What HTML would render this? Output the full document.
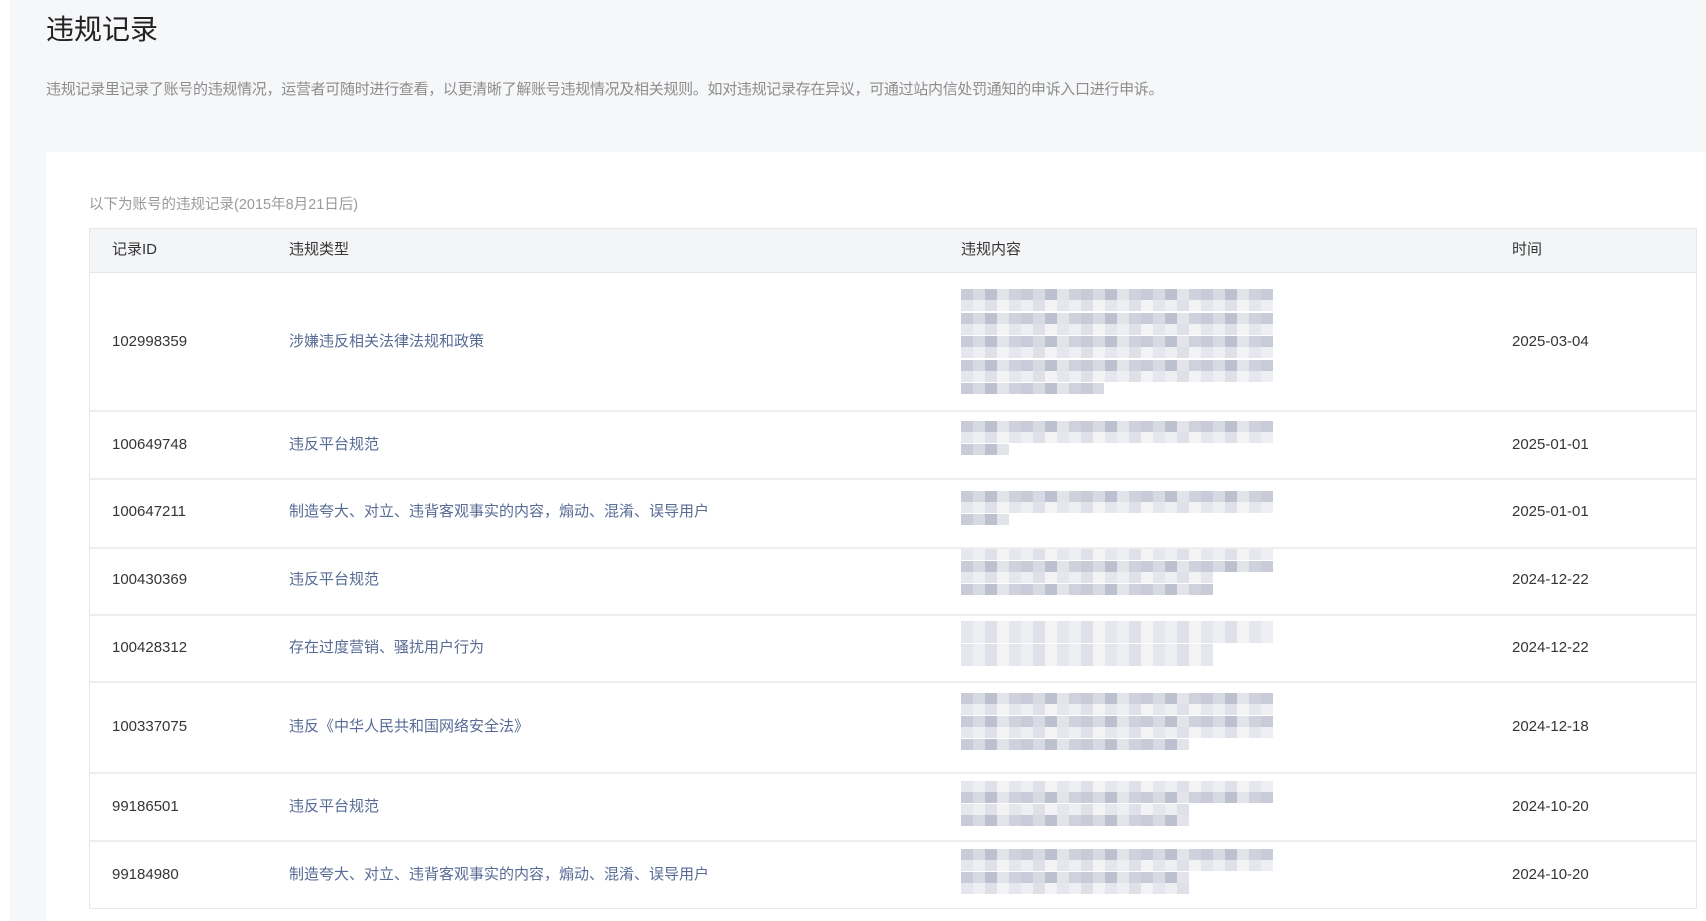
<!DOCTYPE html>
<html><head><meta charset="utf-8"><style>
*{margin:0;padding:0;box-sizing:border-box}
body{width:1706px;height:921px;overflow:hidden;background:#fff;font-family:"Liberation Sans","Noto Sans CJK SC",sans-serif;color:#353535}
.bg{position:absolute;left:10px;top:0;width:1696px;height:921px;background:#f6f7f9}
h1{position:absolute;left:46px;top:14px;font-size:28px;font-weight:normal;color:#222;line-height:32px}
.desc{position:absolute;left:46px;top:80px;font-size:15px;color:#8d8d8d;letter-spacing:-0.3px;line-height:20px;white-space:nowrap}
.card{position:absolute;left:46px;top:152px;width:1660px;height:769px;background:#fff}
.cap{position:absolute;left:89px;top:195px;font-size:14.5px;color:#9a9a9a;line-height:20px}
.tbl{position:absolute;left:89px;top:228px;width:1608px;height:681px;border:1px solid #e7e7eb}
.hd{position:absolute;left:0;top:0;width:100%;height:44px;background:#f4f5f7;border-bottom:1px solid #e7e7eb}
.c{position:absolute;font-size:15px;line-height:20px;white-space:nowrap}
.l{color:#576b95}
.row{position:absolute;left:0;width:100%;border-bottom:2px solid #eeeeef}
.blur{position:absolute;left:871px;width:312px;height:11px;background:repeating-linear-gradient(90deg,#c9ccd8 0 12px,#d8dae3 12px 24px,#bcc0cf 24px 36px,#e3e4ea 36px 48px,#cfd1dc 48px 60px)}
.blur.lt{background:repeating-linear-gradient(90deg,#e6e7ee 0 12px,#eeeff3 12px 24px,#dfe0e8 24px 36px,#f3f3f6 36px 48px)}
</style></head><body>
<div class="bg"></div>
<h1>违规记录</h1>
<div class="desc">违规记录里记录了账号的违规情况，运营者可随时进行查看，以更清晰了解账号违规情况及相关规则。如对违规记录存在异议，可通过站内信处罚通知的申诉入口进行申诉。</div>
<div class="card"></div>
<div class="cap">以下为账号的违规记录(2015年8月21日后)</div>
<div class="tbl">
<div class="hd"></div>
<div class="c" style="left:22px;top:11px">记录ID</div>
<div class="c" style="left:199px;top:11px">违规类型</div>
<div class="c" style="left:871px;top:11px">违规内容</div>
<div class="c" style="left:1422px;top:11px">时间</div>

<div class="row" style="top:44px;height:139px"></div>
<div class="row" style="top:183px;height:68px"></div>
<div class="row" style="top:251px;height:69px"></div>
<div class="row" style="top:320px;height:67px"></div>
<div class="row" style="top:387px;height:67px"></div>
<div class="row" style="top:454px;height:91px"></div>
<div class="row" style="top:545px;height:68px"></div>

<div class="c" style="left:22px;top:103px">102998359</div><div class="c l" style="left:199px;top:103px">涉嫌违反相关法律法规和政策</div><div class="c" style="left:1422px;top:103px">2025-03-04</div>
<div class="c" style="left:22px;top:206px">100649748</div><div class="c l" style="left:199px;top:206px">违反平台规范</div><div class="c" style="left:1422px;top:206px">2025-01-01</div>
<div class="c" style="left:22px;top:273px">100647211</div><div class="c l" style="left:199px;top:273px">制造夸大、对立、违背客观事实的内容，煽动、混淆、误导用户</div><div class="c" style="left:1422px;top:273px">2025-01-01</div>
<div class="c" style="left:22px;top:341px">100430369</div><div class="c l" style="left:199px;top:341px">违反平台规范</div><div class="c" style="left:1422px;top:341px">2024-12-22</div>
<div class="c" style="left:22px;top:409px">100428312</div><div class="c l" style="left:199px;top:409px">存在过度营销、骚扰用户行为</div><div class="c" style="left:1422px;top:409px">2024-12-22</div>
<div class="c" style="left:22px;top:488px">100337075</div><div class="c l" style="left:199px;top:488px">违反《中华人民共和国网络安全法》</div><div class="c" style="left:1422px;top:488px">2024-12-18</div>
<div class="c" style="left:22px;top:568px">99186501</div><div class="c l" style="left:199px;top:568px">违反平台规范</div><div class="c" style="left:1422px;top:568px">2024-10-20</div>
<div class="c" style="left:22px;top:636px">99184980</div><div class="c l" style="left:199px;top:636px">制造夸大、对立、违背客观事实的内容，煽动、混淆、误导用户</div><div class="c" style="left:1422px;top:636px">2024-10-20</div>

<div class="blur" style="top:60px"></div><div class="blur lt" style="top:71px"></div>
<div class="blur" style="top:84px"></div><div class="blur lt" style="top:95px"></div>
<div class="blur" style="top:107px"></div><div class="blur lt" style="top:118px"></div>
<div class="blur" style="top:131px"></div><div class="blur lt" style="top:142px"></div>
<div class="blur" style="top:154px;width:143px"></div>
<div class="blur" style="top:192px"></div><div class="blur lt" style="top:203px"></div><div class="blur" style="top:215px;width:48px"></div>
<div class="blur" style="top:262px"></div><div class="blur lt" style="top:273px"></div><div class="blur" style="top:285px;width:48px"></div>
<div class="blur lt" style="top:320px"></div><div class="blur" style="top:332px"></div><div class="blur lt" style="top:343px;width:252px"></div><div class="blur" style="top:355px;width:252px"></div>
<div class="blur lt" style="top:392px"></div><div class="blur lt" style="top:403px"></div><div class="blur lt" style="top:415px;width:252px"></div><div class="blur lt" style="top:426px;width:252px"></div>
<div class="blur" style="top:464px"></div><div class="blur lt" style="top:475px"></div><div class="blur" style="top:487px"></div><div class="blur lt" style="top:498px"></div><div class="blur" style="top:510px;width:228px"></div>
<div class="blur lt" style="top:552px"></div><div class="blur" style="top:563px"></div><div class="blur lt" style="top:575px;width:228px"></div><div class="blur" style="top:586px;width:228px"></div>
<div class="blur" style="top:620px"></div><div class="blur lt" style="top:631px"></div><div class="blur" style="top:643px;width:228px"></div><div class="blur lt" style="top:654px;width:228px"></div>
</div>
</body></html>
